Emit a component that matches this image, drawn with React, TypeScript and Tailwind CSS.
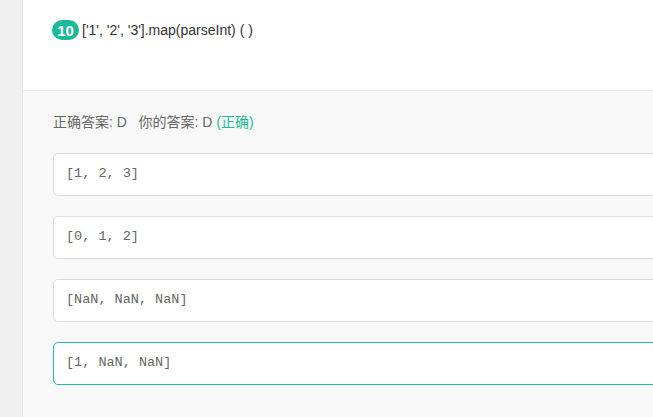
export default function App() {
  const options = ["[1, 2, 3]", "[0, 1, 2]", "[NaN, NaN, NaN]", "[1, NaN, NaN]"];
  return (
    <div className="w-[653px] h-[417px] overflow-hidden flex bg-[#f8f8f8]" style={{ fontFamily: '"Liberation Sans", Arial, "Noto Sans CJK SC", sans-serif' }}>
      <div className="w-[23px] shrink-0 bg-[#efefef] border-r border-[#e3e3e3]" />
      <div className="flex-1 flex flex-col min-w-0">
        <div className="h-[91px] shrink-0 bg-white border-b border-[#ececec] pl-[29px] pt-[20px]">
          <div className="flex items-center h-[20px]">
            <span className="inline-flex items-center justify-center w-[27px] h-[20px] rounded-full bg-[#1bb99a] text-white text-[15px] font-bold leading-none">10</span>
            <span className="ml-[3px] text-[14px] text-[#333]">['1', '2', '3'].map(parseInt) ( )</span>
          </div>
        </div>
        <div className="flex-1 pl-[30px] pt-[21px]">
          <div className="text-[14px] leading-[20px] text-[#666] whitespace-pre">
            正确答案: D{"   "}你的答案: D <span className="text-[#1bb99a]">(正确)</span>
          </div>
          <div className="mt-[21px] flex flex-col gap-[20px]">
            {options.map((o, i) => (
              <div
                key={o}
                className={`w-[650px] h-[43px] rounded-[5px] bg-white flex items-center pl-[12px] text-[13.5px] text-[#666] border ${i === 3 ? "border-[#22b8ab]" : "border-[#dcdcdc]"}`}
                style={{ fontFamily: '"Liberation Mono", "Courier New", monospace' }}
              >
                {o}
              </div>
            ))}
          </div>
        </div>
      </div>
    </div>
  );
}
